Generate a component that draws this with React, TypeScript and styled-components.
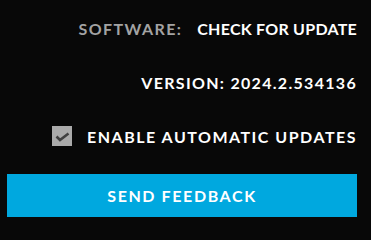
import React, { FC } from "react";
import styled, { createGlobalStyle } from "styled-components";

const GlobalStyle = createGlobalStyle`
  html, body {
    margin: 0;
    padding: 0;
    background: #080808;
  }
  body {
    font-family: Lato, "Open Sans", sans-serif;
  }
`;

const Root = styled.div`
  width: 371px;
  height: 217px;
  overflow: hidden;
  box-sizing: border-box;
  padding: 0 14px 0 7px;
  display: flex;
  flex-direction: column;
  align-items: flex-end;
`;

const Row = styled.div<{ $height: number }>`
  height: ${({ $height }) => $height}px;
  display: flex;
  align-items: center;
  justify-content: flex-end;
`;

const Label = styled.span`
  color: #a3a3a3;
  font-size: 16px;
  font-weight: 700;
  letter-spacing: 1.4px;
  margin-right: 15px;
`;

const LinkText = styled.span`
  color: #ffffff;
  font-size: 16px;
  font-weight: 700;
  letter-spacing: 0.25px;
`;

const Version = styled.span`
  color: #ffffff;
  font-size: 16px;
  font-weight: 700;
  letter-spacing: 1.3px;
`;

const CheckBox = styled.span`
  width: 20px;
  height: 20px;
  background: #aaaaaa;
  display: flex;
  margin-right: 15px;
`;

const CheckLabel = styled.span`
  color: #ffffff;
  font-size: 16px;
  font-weight: 700;
  letter-spacing: 1.5px;
`;

const Button = styled.button`
  align-self: stretch;
  margin-top: auto;
  height: 43px;
  border: none;
  background: #00a8df;
  color: #ffffff;
  font-family: inherit;
  font-size: 16px;
  font-weight: 700;
  letter-spacing: 1.6px;
  padding: 0;
  cursor: pointer;
`;

const App: FC = () => {
  return (
    <Root>
      <GlobalStyle />
      <Row $height={56}>
        <Label>SOFTWARE:</Label>
        <LinkText>CHECK FOR UPDATE</LinkText>
      </Row>
      <Row $height={52}>
        <Version>VERSION: 2024.2.534136</Version>
      </Row>
      <Row $height={56}>
        <CheckBox>
          <svg width="20" height="20" viewBox="0 0 20 20">
            <path
              d="M4.5 10.5 L8 14 L16.5 7.5"
              fill="none"
              stroke="#404040"
              strokeWidth="2.6"
            />
          </svg>
        </CheckBox>
        <CheckLabel>ENABLE AUTOMATIC UPDATES</CheckLabel>
      </Row>
      <Button>SEND FEEDBACK</Button>
    </Root>
  );
};

export default App;
